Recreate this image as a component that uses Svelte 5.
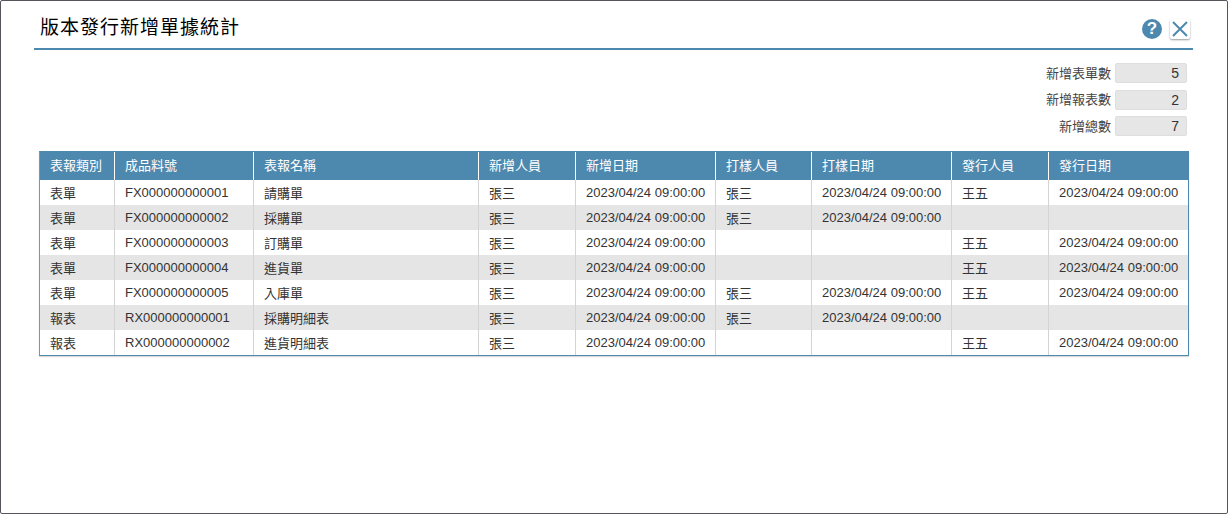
<script>
	const columns = [
		{ label: '表報類別', key: 'type', width: 75 },
		{ label: '成品料號', key: 'code', width: 139 },
		{ label: '表報名稱', key: 'name', width: 225 },
		{ label: '新增人員', key: 'creator', width: 97 },
		{ label: '新增日期', key: 'created', width: 140 },
		{ label: '打樣人員', key: 'proofer', width: 96 },
		{ label: '打樣日期', key: 'proofed', width: 140 },
		{ label: '發行人員', key: 'issuer', width: 97 },
		{ label: '發行日期', key: 'issued', width: 139 }
	];

	const stamp = '2023/04/24 09:00:00';

	const rows = [
		{ type: '表單', code: 'FX000000000001', name: '請購單', creator: '張三', created: stamp, proofer: '張三', proofed: stamp, issuer: '王五', issued: stamp },
		{ type: '表單', code: 'FX000000000002', name: '採購單', creator: '張三', created: stamp, proofer: '張三', proofed: stamp, issuer: '', issued: '' },
		{ type: '表單', code: 'FX000000000003', name: '訂購單', creator: '張三', created: stamp, proofer: '', proofed: '', issuer: '王五', issued: stamp },
		{ type: '表單', code: 'FX000000000004', name: '進貨單', creator: '張三', created: stamp, proofer: '', proofed: '', issuer: '王五', issued: stamp },
		{ type: '表單', code: 'FX000000000005', name: '入庫單', creator: '張三', created: stamp, proofer: '張三', proofed: stamp, issuer: '王五', issued: stamp },
		{ type: '報表', code: 'RX000000000001', name: '採購明細表', creator: '張三', created: stamp, proofer: '張三', proofed: stamp, issuer: '', issued: '' },
		{ type: '報表', code: 'RX000000000002', name: '進貨明細表', creator: '張三', created: stamp, proofer: '', proofed: '', issuer: '王五', issued: stamp }
	];

	const totals = [
		{ label: '新增表單數', value: 5 },
		{ label: '新增報表數', value: 2 },
		{ label: '新增總數', value: 7 }
	];
</script>

<div class="dialog">
	<header class="title-bar">
		<h1>版本發行新增單據統計</h1>
		<div class="actions">
			<button class="help" aria-label="help">?</button>
			<button class="close" aria-label="close">
				<svg width="18" height="18" viewBox="0 0 18 18">
					<path d="M2 2 L16 16 M16 2 L2 16" stroke="#4d88ae" stroke-width="2" fill="none" />
				</svg>
			</button>
		</div>
	</header>

	<div class="totals">
		{#each totals as t}
			<div class="total-row">
				<span class="total-label">{t.label}</span>
				<span class="total-value">{t.value}</span>
			</div>
		{/each}
	</div>

	<table>
		<colgroup>
			{#each columns as c}
				<col style="width: {c.width}px" />
			{/each}
		</colgroup>
		<thead>
			<tr>
				{#each columns as c}
					<th>{c.label}</th>
				{/each}
			</tr>
		</thead>
		<tbody>
			{#each rows as row}
				<tr>
					{#each columns as c}
						<td>{row[c.key]}</td>
					{/each}
				</tr>
			{/each}
		</tbody>
	</table>
</div>

<style>
	:global(body) {
		background: #fff;
	}

	.dialog {
		box-sizing: border-box;
		width: 1228px;
		height: 514px;
		padding: 0 34px 0 33px;
		border: 1px solid #55555c;
		border-radius: 2px;
		background: #fff;
		color: #333;
		font-family: 'Liberation Sans', 'Noto Sans CJK TC', sans-serif;
		font-size: 13px;
	}

	.title-bar {
		display: flex;
		align-items: center;
		justify-content: space-between;
		height: 45px;
		padding: 2px 0 0 6px;
		border-bottom: 2px solid #4d88ae;
	}

	h1 {
		margin: 0;
		color: #000;
		font-size: 19px;
		font-weight: 400;
		letter-spacing: 1px;
	}

	.actions {
		display: flex;
		align-items: center;
		gap: 8px;
		margin: 6px 3px 0 0;
	}

	.help {
		width: 20px;
		height: 20px;
		padding: 0;
		border: none;
		border-radius: 50%;
		background: #4d88ae;
		color: #fff;
		font-family: inherit;
		font-size: 17px;
		font-weight: 700;
		line-height: 20px;
	}

	.close {
		display: flex;
		align-items: center;
		justify-content: center;
		width: 20px;
		height: 20px;
		padding: 0;
		border: none;
		border-radius: 2px;
		background: #fff;
		box-shadow: 0 1px 2px rgba(0, 0, 0, 0.4);
	}

	.totals {
		display: flex;
		flex-direction: column;
		align-items: flex-end;
		gap: 6.5px;
		margin: 13px 6px 0 0;
	}

	.total-row {
		display: flex;
		align-items: center;
		gap: 4px;
		height: 20px;
	}

	.total-label {
		padding-bottom: 2px;
		color: #444;
	}

	.total-value {
		box-sizing: border-box;
		width: 72px;
		height: 20px;
		padding-right: 7px;
		border: 1px solid #dedede;
		border-radius: 2px;
		background: #e6e6e6;
		font-size: 14px;
		line-height: 18px;
		text-align: right;
	}

	table {
		box-sizing: border-box;
		width: 1150px;
		margin: 15px 0 0 5px;
		border: 1px solid #4d88ae;
		border-left-color: #6f9ab8;
		border-collapse: separate;
		border-spacing: 0;
		table-layout: fixed;
		box-shadow: 0 1px 1px rgba(0, 0, 0, 0.15);
	}

	th {
		box-sizing: border-box;
		height: 28px;
		padding: 0 10px 3px;
		border-right: 1px solid #fff;
		background: #4d88ae;
		color: #fff;
		font-weight: 400;
		text-align: left;
	}

	td {
		height: 25px;
		padding: 0 10px;
		border-right: 1px solid #d4d4d4;
		box-sizing: border-box;
		white-space: nowrap;
	}

	th:last-child,
	td:last-child {
		border-right: none;
	}

	tbody tr:nth-child(even) td {
		background: #e5e5e5;
	}
</style>
